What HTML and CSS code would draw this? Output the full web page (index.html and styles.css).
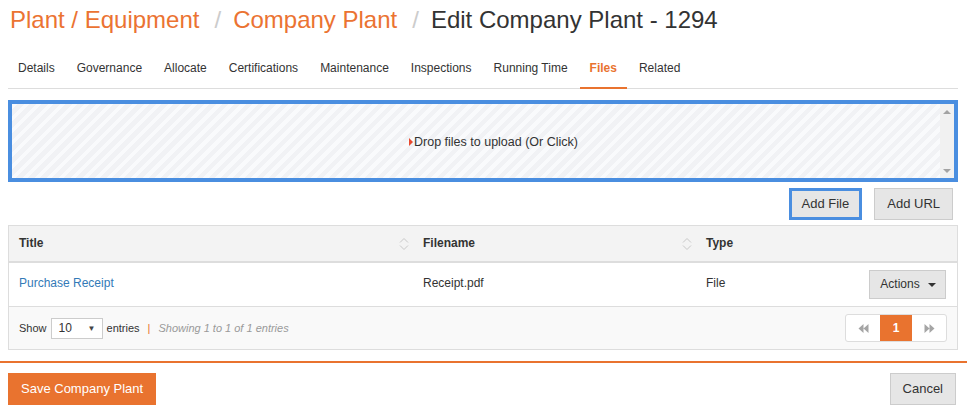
FILE: index.html
```html
<!DOCTYPE html>
<html lang="en">
<head>
    <meta charset="UTF-8">
    <meta name="viewport" content="width=device-width, initial-scale=1.0">
    <title>Edit Company Plant - 1294</title>
    <link rel="stylesheet" href="styles.css">
</head>
<body>
    <div class="container">
        <h1 class="crumbs">
            <a href="#">Plant / Equipment</a><span class="sep">/</span><a href="#">Company Plant</a><span class="sep">/</span><span class="current">Edit Company Plant - 1294</span>
        </h1>

        <ul class="tabs">
            <li><a href="#">Details</a></li>
            <li><a href="#">Governance</a></li>
            <li><a href="#">Allocate</a></li>
            <li><a href="#">Certifications</a></li>
            <li><a href="#">Maintenance</a></li>
            <li><a href="#">Inspections</a></li>
            <li><a href="#">Running Time</a></li>
            <li class="active"><a href="#">Files</a></li>
            <li><a href="#">Related</a></li>
        </ul>

        <div class="dropzone">
            <div class="drop-area">
                <span class="drop-text"><i class="arrow"></i>Drop files to upload (Or Click)</span>
            </div>
            <div class="scrollbar">
                <i class="sb-up"></i>
                <i class="sb-down"></i>
            </div>
        </div>

        <div class="file-buttons">
            <button class="btn btn-focus">Add File</button>
            <button class="btn">Add URL</button>
        </div>

        <div class="grid">
            <table>
                <thead>
                    <tr>
                        <th class="col-title">Title<span class="sort"><svg width="10" height="14" viewBox="0 0 10 14"><path d="M1 5.5 L5 1.5 L9 5.5 M1 8.5 L5 12.5 L9 8.5" fill="none" stroke="#c8c8c8" stroke-width="1"/></svg></span></th>
                        <th class="col-file">Filename<span class="sort"><svg width="10" height="14" viewBox="0 0 10 14"><path d="M1 5.5 L5 1.5 L9 5.5 M1 8.5 L5 12.5 L9 8.5" fill="none" stroke="#c8c8c8" stroke-width="1"/></svg></span></th>
                        <th class="col-type">Type</th>
                        <th></th>
                    </tr>
                </thead>
                <tbody>
                    <tr>
                        <td><a href="#">Purchase Receipt</a></td>
                        <td>Receipt.pdf</td>
                        <td>File</td>
                        <td class="actions"><button class="btn btn-small">Actions <span class="caret"></span></button></td>
                    </tr>
                </tbody>
            </table>
            <div class="grid-footer">
                <div class="length">
                    Show
                    <span class="select">10<span class="select-arrow">&#9660;</span></span>
                    entries
                    <span class="bar">|</span>
                    <em>Showing 1 to 1 of 1 entries</em>
                </div>
                <div class="pager">
                    <a href="#" class="pg"><svg width="11" height="9" viewBox="0 0 11 9"><path d="M5.5 0 L0.5 4.5 L5.5 9 Z M10.5 0 L5.5 4.5 L10.5 9 Z" fill="#a5a5a5"/></svg></a>
                    <a href="#" class="pg current">1</a>
                    <a href="#" class="pg"><svg width="11" height="9" viewBox="0 0 11 9"><path d="M0.5 0 L5.5 4.5 L0.5 9 Z M5.5 0 L10.5 4.5 L5.5 9 Z" fill="#a5a5a5"/></svg></a>
                </div>
            </div>
        </div>
    </div>

    <div class="form-footer">
        <button class="btn btn-primary">Save Company Plant</button>
        <button class="btn">Cancel</button>
    </div>
</body>
</html>
```

FILE: styles.css
```css
body {
    font-family: "Liberation Sans", Arial, sans-serif;
    font-size: 12px;
    margin: 0;
    padding: 0;
    color: #333;
    background: #fff;
}
a {
    text-decoration: none;
}
.container {
    margin: 0 9px 0 8px;
}
.crumbs {
    margin: 0;
    padding: 7px 0 0 2px;
    font-size: 24px;
    font-weight: normal;
    line-height: 26px;
    white-space: nowrap;
}
.crumbs a {
    color: #eb7332;
}
.crumbs .sep {
    color: #ccc;
    padding: 0 12px 0 15px;
}
.crumbs .current {
    color: #333;
}
.tabs {
    list-style: none;
    margin: 16px 0 0;
    padding: 0;
    display: flex;
    border-bottom: 1px solid #ddd;
}
.tabs li {
    margin-right: 2px;
    margin-bottom: -1px;
}
.tabs a {
    display: block;
    padding: 10px 10px;
    line-height: 18px;
    color: #333;
    border-bottom: 2px solid transparent;
}
.tabs .active a {
    color: #e9732f;
    font-weight: bold;
    border-bottom-color: #e9732f;
}
.dropzone {
    margin-top: 11px;
    height: 74px;
    border: 4px solid #4a8ee0;
    display: flex;
}
.drop-area {
    flex: 1;
    display: flex;
    align-items: center;
    justify-content: center;
    padding: 2px 0 0 35px;
    background: repeating-linear-gradient(135deg, #f9fafc 0 4px, #f1f2f5 4px 8.5px);
}
.drop-text {
    display: flex;
    align-items: center;
    font-size: 12.5px;
}
.arrow {
    display: inline-block;
    border-left: 4px solid #e8492f;
    border-top: 4px solid transparent;
    border-bottom: 4px solid transparent;
    margin-right: 1px;
}
.scrollbar {
    width: 14px;
    background: #f1f1f1;
    display: flex;
    flex-direction: column;
    justify-content: space-between;
    align-items: center;
    padding: 6px 0 5px;
}
.sb-up {
    border-bottom: 4px solid #a3a3a3;
    border-left: 4px solid transparent;
    border-right: 4px solid transparent;
}
.sb-down {
    border-top: 4px solid #a3a3a3;
    border-left: 4px solid transparent;
    border-right: 4px solid transparent;
}
.file-buttons {
    display: flex;
    justify-content: flex-end;
    gap: 12px;
    margin: 6px 5px 0 0;
}
.btn {
    font-family: "Liberation Sans", Arial, sans-serif;
    font-size: 13px;
    line-height: 18px;
    padding: 6px 12px;
    color: #333;
    background: #e6e6e6;
    border: 1px solid #ccc;
    border-radius: 0;
    cursor: pointer;
    white-space: nowrap;
}
.btn-focus {
    border: 3px solid #4a8ee0;
    padding: 4px 10px;
}
.grid {
    margin-top: 5px;
    border: 1px solid #ddd;
}
table {
    width: 100%;
    border-collapse: collapse;
    table-layout: fixed;
}
th {
    background: #f3f3f3;
    text-align: left;
    font-weight: bold;
    padding: 8px 10px 9px;
    line-height: 18px;
    border-bottom: 2px solid #ddd;
    position: relative;
}
th .sort {
    position: absolute;
    right: 4px;
    top: 11px;
    line-height: 0;
}
th, td {
    box-sizing: border-box;
}
.col-title {
    width: 404px;
}
.col-file {
    width: 283px;
}
.col-type {
    width: 160px;
}
td {
    padding: 6px 10px 10px;
    line-height: 18px;
    border-bottom: 1px solid #ddd;
    vertical-align: middle;
    height: 44px;
}
td a {
    color: #337ab7;
}
td.actions {
    text-align: right;
    padding: 7px 11px 7px 10px;
    white-space: nowrap;
}
.btn-small {
    font-size: 12px;
    padding: 5px 9px 5px 10px;
    line-height: 17px;
}
.caret {
    display: inline-block;
    vertical-align: middle;
    margin-left: 5px;
    border-top: 4px solid #333;
    border-left: 4px solid transparent;
    border-right: 4px solid transparent;
}
.grid-footer {
    background: #f9f9f9;
    display: flex;
    justify-content: space-between;
    align-items: center;
    padding: 7px 10px 7px 10px;
}
.length {
    display: flex;
    align-items: center;
    gap: 4px;
    font-size: 11px;
}
.select {
    display: inline-flex;
    justify-content: space-between;
    align-items: center;
    width: 37px;
    height: 19px;
    padding: 0 6px 0 7px;
    border: 1px solid #ccc;
    background: #fff;
    font-size: 12px;
}
.select-arrow {
    font-size: 8px;
    color: #444;
}
.bar {
    color: #e9732f;
    margin: 0 4px;
}
.length em {
    color: #999;
}
.pager {
    display: flex;
    border: 1px solid #ddd;
    border-radius: 3px;
    background: #fff;
    height: 26px;
}
.pg {
    display: flex;
    align-items: center;
    justify-content: center;
    width: 34px;
    color: #fff;
    font-weight: bold;
}
.pg.current {
    width: 32px;
    background: #e9732f;
}
.form-footer {
    margin-top: 11px;
    border-top: 2px solid #e9732f;
    padding: 10px 11px 0 8px;
    display: flex;
    justify-content: space-between;
}
.btn-primary {
    background: #e9732f;
    border-color: #e9732f;
    color: #fff;
}
```
